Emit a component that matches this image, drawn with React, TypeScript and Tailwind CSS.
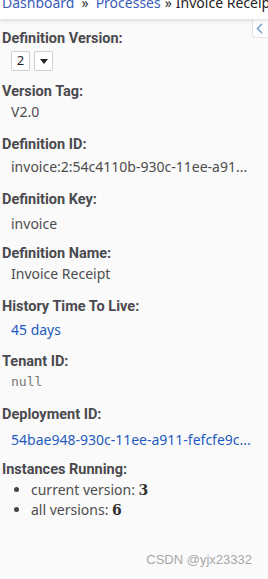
import { ChevronLeft } from 'lucide-react';

const font = { fontFamily: '"Noto Sans", "Open Sans", sans-serif' };
const labelFont = { fontFamily: 'Roboto, "Noto Sans", sans-serif' };

function Label({ children, className = '' }: { children: React.ReactNode; className?: string }) {
  return (
    <dt className={`font-bold text-[14.5px] leading-[18px] text-[#4a4a4f] ${className}`} style={labelFont}>
      {children}
    </dt>
  );
}

export default function App() {
  return (
    <div className="w-[268px] h-[579px] bg-[#fafafa] relative overflow-hidden text-[#444]" style={font}>
      <div className="h-[19px] bg-white shadow-[0_2px_4px_rgba(0,0,0,0.12)] relative z-10 overflow-hidden whitespace-nowrap">
        <div className="text-[14px] leading-[14px] -mt-[4px] pl-[2px]">
          <a className="text-[#3b5cb8]">Dashboard</a>
          <span className="mx-[7px] text-[#333]">»</span>
          <a className="text-[#3b5cb8]">Processes</a>
          <span className="mx-[4px] text-[#333]">»</span>
          <span className="text-[#222]">Invoice Receipt</span>
        </div>
      </div>

      <button className="absolute right-0 top-[19px] w-[16px] h-[19px] bg-white border-l border-b border-[#e3e3e3] rounded-bl-[3px] flex items-center justify-center">
        <ChevronLeft size={17} strokeWidth={2} className="text-[#6e9bd3] -ml-[2px]" />
      </button>

      <dl className="px-[2px] pt-[11px]">
        <Label>Definition Version:</Label>
        <dd className="pl-[9px] mt-[3px] flex gap-[4px]">
          <span className="w-[19px] h-[20px] border border-[#cfcfcf] rounded-[2px] bg-white flex items-center justify-center text-[13px] text-[#222]">2</span>
          <span className="w-[19px] h-[20px] border border-[#cfcfcf] rounded-[2px] bg-white flex items-center justify-center">
            <svg width="8" height="5" viewBox="0 0 8 5"><path d="M0 0h8L4 5z" fill="#222" /></svg>
          </span>
        </dd>

        <Label className="mt-[12px]">Version Tag:</Label>
        <dd className="pl-[9px] mt-[2px] text-[14px] leading-[18px] text-[#4d4d4d]">V2.0</dd>

        <Label className="mt-[15px]">Definition ID:</Label>
        <dd className="pl-[9px] mt-[4px] text-[14px] leading-[18px] text-[#4d4d4d] truncate">invoice:2:54c4110b-930c-11ee-a91...</dd>

        <Label className="mt-[15px]">Definition Key:</Label>
        <dd className="pl-[9px] mt-[6px] text-[14px] leading-[18px] text-[#4d4d4d]">invoice</dd>

        <Label className="mt-[12px]">Definition Name:</Label>
        <dd className="pl-[9px] mt-[2px] text-[14px] leading-[18px] text-[#4d4d4d]">Invoice Receipt</dd>

        <Label className="mt-[15px]">History Time To Live:</Label>
        <dd className="pl-[9px] mt-[5px] text-[14px] leading-[18px]"><a className="text-[#1f5cbf]">45 days</a></dd>

        <Label className="mt-[14px]">Tenant ID:</Label>
        <dd className="pl-[9px] mt-[2px] text-[13px] leading-[18px] text-[#777]" style={{ fontFamily: '"DejaVu Sans Mono", monospace' }}>null</dd>

        <Label className="mt-[15px]">Deployment ID:</Label>
        <dd className="pl-[9px] mt-[7px] text-[14px] leading-[18px]"><a className="text-[#1f5cbf]">54bae948-930c-11ee-a911-fefcfe9c...</a></dd>

        <Label className="mt-[12px]">Instances Running:</Label>
        <dd className="mt-[1px] text-[14px] leading-[20px] text-[#4d4d4d]">
          <ul className="list-disc pl-[29px] marker:text-[#444]">
            <li>current version: <b className="text-[#333]" style={{ fontFamily: '"DejaVu Serif", serif' }}>3</b></li>
            <li>all versions: <b className="text-[#333]" style={{ fontFamily: '"DejaVu Serif", serif' }}>6</b></li>
          </ul>
        </dd>
      </dl>

      <div className="absolute right-[16px] bottom-[10px] text-[13px] text-[#a8a8a8]" style={{ fontFamily: '"Liberation Sans", sans-serif' }}>CSDN @yjx23332</div>
    </div>
  );
}
